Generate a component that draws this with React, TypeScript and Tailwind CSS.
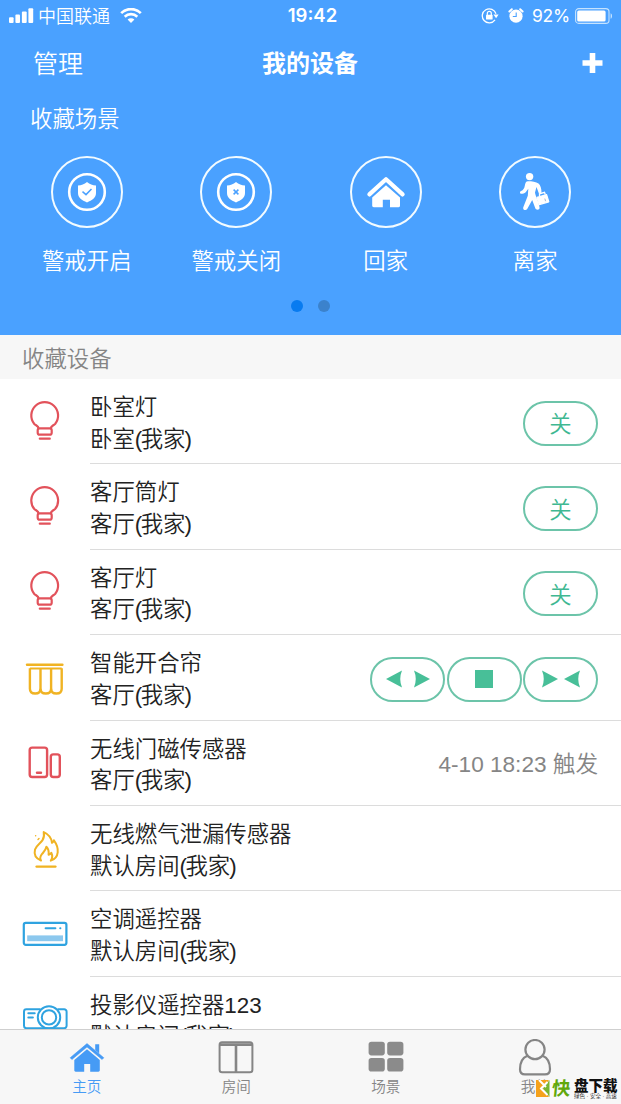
import React from "react";

type IIcon = () => React.ReactElement;

type IScene = {
  name: string;
  icon: IIcon;
};

type IDevice = {
  name: string;
  room: string;
  icon: IIcon;
  action?: React.ReactNode;
};

const RED = "#e2525b";
const YELLOW = "#f0b323";
const BLUE = "#2fa3e0";
const GREEN = "#48bf98";

/* ---------- status bar ---------- */

const SignalIcon = () => (
  <svg width="25" height="16" viewBox="0 0 25 16" fill="#fff">
    <rect x="0" y="9.3" width="4.6" height="5.7" rx="1" />
    <rect x="6.4" y="6.6" width="4.6" height="8.4" rx="1" />
    <rect x="12.9" y="3.6" width="4.8" height="11.4" rx="1" />
    <rect x="19.4" y="0.3" width="4.8" height="14.7" rx="1" />
  </svg>
);

const WifiIcon = () => (
  <svg width="22" height="16" viewBox="0 0 22 16" fill="none" stroke="#fff">
    <path d="M1.2 5.1a14 14 0 0 1 19.6 0" strokeWidth="2.7" />
    <path d="M4.7 8.7a9 9 0 0 1 12.6 0" strokeWidth="2.6" />
    <path d="M11 15.1l-3.4-3.5a4.9 4.9 0 0 1 6.8 0z" fill="#fff" stroke="none" />
  </svg>
);

const RotationLockIcon = () => (
  <svg width="18" height="16" viewBox="0 0 18 16" fill="none" stroke="#fff">
    <path d="M14 11.9A7 7 0 1 1 15 5.8" strokeWidth="1.3" />
    <path d="M12.4 6.6h5.2l-2.5 3.6z" fill="#fff" stroke="none" />
    <rect x="5" y="6.8" width="6.6" height="4.8" rx="0.6" fill="#fff" stroke="none" />
    <path d="M6.3 7.200V5.400a2 2 0 0 1 4 0v1.800" strokeWidth="1.2" />
  </svg>
);

const AlarmIcon = () => (
  <svg width="16" height="16" viewBox="0 0 16 16">
    <circle cx="8" cy="8.2" r="6.6" fill="#fff" />
    <path d="M1.4 3.5 3.8 1.3M14.6 3.5l-2.4-2.2" stroke="#fff" strokeWidth="2" strokeLinecap="round" />
    <path d="M8.2 4.5v4H4.8" fill="none" stroke="#4aa1ff" strokeWidth="1.1" />
  </svg>
);

const BatteryIcon = () => (
  <svg width="38" height="16" viewBox="0 0 38 16">
    <rect x="0.6" y="0.6" width="33.4" height="14.8" rx="3.2" fill="none" stroke="#c5e3ff" strokeWidth="1.1" />
    <rect x="2.2" y="2.4" width="28.4" height="11.2" rx="1.6" fill="#fff" />
    <path d="M35.6 5.2c1.9.8 1.9 4.8 0 5.6z" fill="#c5e3ff" />
  </svg>
);

const StatusBar = () => (
  <div className="grid h-8 grid-cols-3 items-center pr-[8px] pl-[9px]">
    <div className="flex items-center">
      <SignalIcon />
      <span className="ml-1 pt-[2px] text-[18px] leading-[30px] font-[350]">中国联通</span>
      <span className="ml-[10px]">
        <WifiIcon />
      </span>
    </div>
    <div className="pl-[3px] text-center font-['Inter'] text-[18.5px] font-semibold">19:42</div>
    <div className="flex items-center justify-end">
      <RotationLockIcon />
      <span className="ml-[9px]">
        <AlarmIcon />
      </span>
      <span className="mr-[5px] ml-[8px] font-['Inter'] text-[17.5px] tracking-[-0.2px]">92%</span>
      <BatteryIcon />
    </div>
  </div>
);

/* ---------- scenes ---------- */

const shield = "M28 0c2.7 2.3 5.6 3.3 9 3.4v7.6c0 4.7-3.8 7.4-9 9.4-5.2-2-9-4.7-9-9.4V3.4c3.4-.1 6.3-1.1 9-3.4z";

const ShieldCheckIcon = () => (
  <svg width="56" height="56" viewBox="0 0 56 56" fill="none">
    <circle cx="28" cy="28" r="17.8" stroke="#fff" strokeWidth="2.6" />
    <path d={shield} fill="#fff" transform="translate(0 18)" />
    <path d="M23.5 27.6l3.5 3 5.5-5.6" stroke="#4aa1ff" strokeWidth="1.5" />
  </svg>
);

const ShieldCrossIcon = () => (
  <svg width="56" height="56" viewBox="0 0 56 56" fill="none">
    <circle cx="28" cy="28" r="17.8" stroke="#fff" strokeWidth="2.6" />
    <path d={shield} fill="#fff" transform="translate(0 18)" />
    <path d="M25.6 25.6l4.8 4.8m0-4.8l-4.8 4.8" stroke="#4aa1ff" strokeWidth="1.5" />
  </svg>
);

const ArriveHomeIcon = () => (
  <svg width="56" height="56" viewBox="0 0 56 56">
    <path d="M11.4 30.4L28 15.2l16.6 15.2" fill="none" stroke="#fff" strokeWidth="4.2" strokeLinecap="round" strokeLinejoin="round" />
    <path d="M28 21.2l14 12.4v8.2c0 .9-.5 1.4-1.4 1.4H32v-7.4h-7.200v7.400h-9c-.9 0-1.600-.5-1.600-1.400v-8.200z" fill="#fff" />
  </svg>
);

const LeaveHomeIcon = () => (
  <svg width="56" height="56" viewBox="0 0 56 56" fill="#fff">
    <circle cx="22.6" cy="12.6" r="3.7" />
    <path d="M21 17.2c4 0 8 .5 10.5 2.3 2 1.6 3 5 3 9.3l-2.7.4-2.3-6.2-1.5 5.6c.5 4 3.5 8 4.6 15.2.3 2-3.2 2.8-4.2.8L25.2 36l-5 9c-1.2 2-4.7.8-4-1.6l4.6-11.6.5-7-2.6 3.4c-1.2 1.2-3 1.6-4.2 1.6-1.9 0-2-2.4-.4-2.9 2.2-.8 3.1-2.4 3.7-5.2.5-2.5 1-4.5 3.2-4.5z" />
    <path d="M30 33.4l9.6-2.8 2.2 7.2-9.6 2.8z" stroke="#fff" strokeWidth="1.2" strokeLinejoin="round" />
    <path d="M32.5 32v-2.2l5-1.4.8 2" fill="none" stroke="#fff" strokeWidth="1.3" />
    <path d="M37.8 34.6l.8 2.6" stroke="#a9b8d0" strokeWidth="1" />
  </svg>
);

const scenes: IScene[] = [
  { name: "警戒开启", icon: ShieldCheckIcon },
  { name: "警戒关闭", icon: ShieldCrossIcon },
  { name: "回家", icon: ArriveHomeIcon },
  { name: "离家", icon: LeaveHomeIcon },
];

const Scene = ({ name, icon: Icon }: IScene) => (
  <button className="flex flex-col items-center">
    <span className="flex size-[72px] items-center justify-center rounded-full border-2 border-[#f2fbff]">
      <Icon />
    </span>
    <span className="mt-[18px] text-[22.4px] leading-8 font-[350]">{name}</span>
  </button>
);

/* ---------- devices ---------- */

const BulbIcon = () => (
  <svg width="50" height="44" viewBox="0 0 50 44" fill="none" stroke={RED} strokeWidth="2.2">
    <path d="M18.6 28.5c0-2.5-2.3-2.8-4.3-4.5a13.4 13.4 0 1 1 20.8 0c-2 1.7-4.3 2-4.3 4.5" />
    <rect x="17.7" y="28.3" width="14" height="6.4" rx="2" />
    <path d="M19.8 38.7h10" strokeLinecap="round" />
  </svg>
);

const CurtainIcon = () => (
  <svg width="50" height="44" viewBox="0 0 50 44" fill="none" stroke={YELLOW} strokeWidth="2.4">
    <path d="M7 8.7h35.4" strokeLinecap="round" />
    <path d="M9.9 12.6h31.8" strokeWidth="2" />
    <path d="M9.9 12.2v20.5c0 3 2 4.8 5.3 4.8s5.3-1.8 5.3-4.8V12.2" />
    <path d="M20.5 32.7c0 3 2 4.8 5.3 4.8s5.3-1.8 5.3-4.8V12.2" />
    <path d="M31.1 32.7c0 3 2 4.8 5.3 4.8s5.3-1.8 5.3-4.8V12.2" />
  </svg>
);

const DoorSensorIcon = () => (
  <svg width="50" height="44" viewBox="0 0 50 44" fill="none" stroke={RED} strokeWidth="2.4">
    <rect x="9.7" y="6.6" width="17.4" height="29.4" rx="2.5" />
    <rect x="30.8" y="13.4" width="9" height="22.6" rx="2.5" />
    <path d="M17 31.8h4" strokeLinecap="round" />
  </svg>
);

const FlameIcon = () => (
  <svg width="50" height="44" viewBox="0 0 50 44" fill="none" stroke={YELLOW} strokeWidth="2" strokeLinejoin="round" strokeLinecap="round">
    <path d="M21 33.6c-5-2-7.2-6.2-6-11 1-4 5.2-6 7.4-9.2 1.6-2.4 2-4.900 1.300-8.300 4.400 2 7.800 5.600 8.300 10.700.8-.4 1.500-1.300 1.900-2.500 2.600 3.500 4.300 7.600 3.800 12-.4 4-3 7-6.900 8.300 1.700-2.500 1.900-5 .5-7.800-.8 1-1.700 1.600-2.700 1.900.4-3.100-.2-5.900-2.200-8-.5 3.300-2.400 4.900-4.300 7.200-1.900 2.300-2.600 4.400-1.100 6.700z" />
    <path d="M16.6 39.6h18.8" strokeWidth="2.4" />
    <path d="M15.6 8.7h.1M18 12.5l1-1" strokeWidth="1.4" />
  </svg>
);

const AirConditionerIcon = () => (
  <svg width="50" height="44" viewBox="0 0 50 44" fill="none" stroke={BLUE} strokeWidth="2.2">
    <rect x="3.8" y="10.8" width="42.6" height="22" rx="2" />
    <path d="M25.6 16.2h9.8M40.2 16.2h.2" strokeWidth="2" strokeLinecap="round" />
    <rect x="7.2" y="23.4" width="35.8" height="5.8" fill="#8cc8ee" stroke="none" />
  </svg>
);

const ProjectorIcon = () => (
  <svg width="50" height="44" viewBox="0 0 50 44" fill="none" stroke={BLUE} strokeWidth="2">
    <path d="M20.5 12.3H6.4A2.4 2.4 0 0 0 4 14.7v14.1a2.4 2.4 0 0 0 2.4 2.4h37.8a2.400 2.400 0 0 0 2.400-2.400V14.700a2.400 2.400 0 0 0-2.400-2.400H37.500" />
    <circle cx="29" cy="20.4" r="11.2" />
    <circle cx="29" cy="20.4" r="7.2" />
    <path d="M8.3 16.2h6.4M8.3 20.6h4.6" strokeLinecap="round" />
  </svg>
);

const Pill = ({ children }: { children: React.ReactNode }) => (
  <button className="flex h-[45px] w-[75px] items-center justify-center rounded-full border-2 border-[#6cc4a9] text-[22.4px] font-[350] text-[#3fb892]">
    {children}
  </button>
);

const OffButton = () => (
  <Pill>
    <span className="pt-1 leading-8">关</span>
  </Pill>
);

const OpenIcon = () => (
  <svg width="44" height="18" viewBox="0 0 44 18" fill={GREEN}>
    <path d="M0 9L16 .5Q12.5 9 16 17.5zM44 9L28 .5Q31.5 9 28 17.5z" />
  </svg>
);

const CloseIcon = () => (
  <svg width="40" height="18" viewBox="0 0 40 18" fill={GREEN}>
    <path d="M17 9L1 .5Q4.5 9 1 17.5zM23 9L39 .5Q35.5 9 39 17.5z" />
  </svg>
);

const CurtainControls = () => (
  <div className="flex gap-[1.5px]">
    <Pill>
      <OpenIcon />
    </Pill>
    <Pill>
      <span className="size-[18px] bg-[#48bf98]" />
    </Pill>
    <Pill>
      <CloseIcon />
    </Pill>
  </div>
);

const devices: IDevice[] = [
  { name: "卧室灯", room: "卧室", icon: BulbIcon, action: <OffButton /> },
  { name: "客厅筒灯", room: "客厅", icon: BulbIcon, action: <OffButton /> },
  { name: "客厅灯", room: "客厅", icon: BulbIcon, action: <OffButton /> },
  { name: "智能开合帘", room: "客厅", icon: CurtainIcon, action: <CurtainControls /> },
  {
    name: "无线门磁传感器",
    room: "客厅",
    icon: DoorSensorIcon,
    action: <span className="text-[22.6px] font-[350] text-[#858585]">4-10 18:23 触发</span>,
  },
  { name: "无线燃气泄漏传感器", room: "默认房间", icon: FlameIcon },
  { name: "空调遥控器", room: "默认房间", icon: AirConditionerIcon },
  { name: "投影仪遥控器123", room: "默认房间", icon: ProjectorIcon },
];

const DeviceRow = ({ name, room, icon: Icon, action }: IDevice) => (
  <li className="flex h-[85.4px] shrink-0 items-center pl-5">
    <Icon />
    <div className="ml-5 flex h-full flex-1 items-center justify-between border-b border-[#dcdcdc] pr-[23px]">
      <div className="pt-[5px] text-[22.4px] leading-[31.6px] font-[350] text-[#222]">
        <p>{name}</p>
        <p>
          {room}
          <span className="tracking-[-1.6px]">(</span>我家
          <span className="-ml-[1px]">)</span>
        </p>
      </div>
      <div className="pt-[4px]">{action}</div>
    </div>
  </li>
);

/* ---------- tab bar ---------- */

const HomeTabIcon = () => (
  <svg width="36" height="34" viewBox="0 0 36 34" fill="#469bf5">
    <path d="M1.2 16.8L18 2.6l16.8 14.2-1.7 1.7L18 5.9 2.9 18.5z" stroke="#469bf5" strokeWidth=".6" />
    <path d="M26.2 3.2h4v9.3l-4-3.500z" />
    <path d="M18 8.2l12.8 10.7v10.400c0 .8-.6 1.400-1.400 1.400h-8.200v-7.600h-6v7.600H6.700c-.8 0-1.400-.6-1.400-1.400V18.900z" />
  </svg>
);

const RoomTabIcon = () => (
  <svg width="36" height="34" viewBox="0 0 36 34" fill="none" stroke="#858585" strokeWidth="2">
    <rect x="1.6" y="1.2" width="32.8" height="30" rx="2.5" />
    <path d="M1.6 3.6h32.8M18 4v27" strokeWidth="2.6" />
  </svg>
);

const SceneTabIcon = () => (
  <svg width="36" height="34" viewBox="0 0 36 34" fill="#8b8b8b">
    <rect x="0.6" y="0.8" width="16.2" height="13.6" rx="2.8" />
    <rect x="19.2" y="0.8" width="16.2" height="13.6" rx="2.8" />
    <rect x="0.6" y="17" width="16.2" height="13.6" rx="2.8" />
    <rect x="19.2" y="17" width="16.2" height="13.6" rx="2.8" />
  </svg>
);

const ProfileTabIcon = () => (
  <svg width="36" height="38" viewBox="0 0 36 38" fill="none" stroke="#858585" strokeWidth="2.2">
    <circle cx="18" cy="10.6" r="9.6" />
    <path d="M10.400 16.800C6 18.600 3 23.500 3 30.200c0 3.500 1.600 5.200 5 5.200h20c3.400 0 5-1.700 5-5.200 0-6.700-3-11.600-7.400-13.400" />
  </svg>
);

const tabs = [
  { name: "主页", icon: HomeTabIcon, active: true },
  { name: "房间", icon: RoomTabIcon },
  { name: "场景", icon: SceneTabIcon },
  { name: "我的", icon: ProfileTabIcon },
];

const TabBar = () => (
  <nav className="grid h-[75px] shrink-0 grid-cols-4 border-t border-[#cfcfcf] bg-[#f7f7f7] pr-[11px] pl-[12px]">
    {tabs.map(({ name, icon: Icon, active }) => (
      <button key={name} className="flex flex-col items-center">
        <span className="flex h-[47px] items-center pt-[8px]">
          <Icon />
        </span>
        <span className={active ? "text-[14.6px] leading-5 font-[350] text-[#469bf5]" : "text-[14.6px] leading-5 font-[350] text-[#858585]"}>
          {name}
        </span>
      </button>
    ))}
  </nav>
);

const Watermark = () => (
  <div className="absolute right-[3px] bottom-[4px] flex h-[20px] items-start bg-[#f9f9f9]">
    <svg width="14" height="18" viewBox="0 0 14 18">
      <path d="M0 0h13L7 8.3 13 17H0z" fill="#f5a21c" />
      <path d="M13.5 0v17L7 8.5z" fill="#79b530" />
      <path d="M3 0L10 7M11.500 2L5 8.500l6.500 6.500" fill="none" stroke="#fff" strokeWidth="2" />
    </svg>
    <span className="ml-[2px] w-[19px] -skew-x-6 text-[18.5px] leading-[18px] font-bold text-[#62a80d]">快</span>
    <div className="ml-[3px] flex w-[44px] flex-col">
      <span className="text-[14.5px] leading-[13px] font-black text-[#111]">盘下载</span>
      <span className="text-[5.5px] leading-[6px] whitespace-nowrap text-[#333]">绿色 · 安全 · 高速</span>
    </div>
  </div>
);

export default function App() {
  return (
    <div
      lang="zh-CN"
      className="relative flex h-[1104px] w-[621px] flex-col overflow-hidden bg-white font-['Liberation_Sans','Noto_Sans_CJK_SC',sans-serif]"
    >
      <header className="h-[335px] shrink-0 bg-[#4aa1ff] text-white">
        <StatusBar />
        <div className="grid h-[62px] grid-cols-3 items-center pr-[18px] pl-[33px]">
          <button className="pt-[3px] text-left text-[25px] font-[350]">管理</button>
          <h1 className="-ml-[16px] pt-[2px] text-center text-[24px] font-bold">我的设备</h1>
          <button className="flex justify-end">
            <svg width="21" height="21" viewBox="0 0 21 21" fill="none" stroke="#fff" strokeWidth="5.6">
              <path d="M10.5 0v20M.5 10h20" />
            </svg>
          </button>
        </div>
        <h2 className="mt-[10px] pl-[30px] text-[22.4px] leading-8 font-[350]">收藏场景</h2>
        <div className="mt-[20px] grid grid-cols-4 pr-[11px] pl-[12px]">
          {scenes.map((scene) => (
            <Scene key={scene.name} {...scene} />
          ))}
        </div>
        <div className="mt-[22px] flex justify-center gap-[15px]">
          <span className="size-3 rounded-full bg-[#087bf0]" />
          <span className="size-3 rounded-full bg-[#3b82cc]" />
        </div>
      </header>

      <h2 className="h-[44px] shrink-0 bg-[#f7f7f7] pl-[22px] text-[22.4px] leading-[49px] font-[350] text-[#858585]">
        收藏设备
      </h2>
      <ul className="flex min-h-0 flex-1 flex-col overflow-hidden">
        {devices.map((device) => (
          <DeviceRow key={device.name} {...device} />
        ))}
      </ul>

      <TabBar />
      <Watermark />
    </div>
  );
}
